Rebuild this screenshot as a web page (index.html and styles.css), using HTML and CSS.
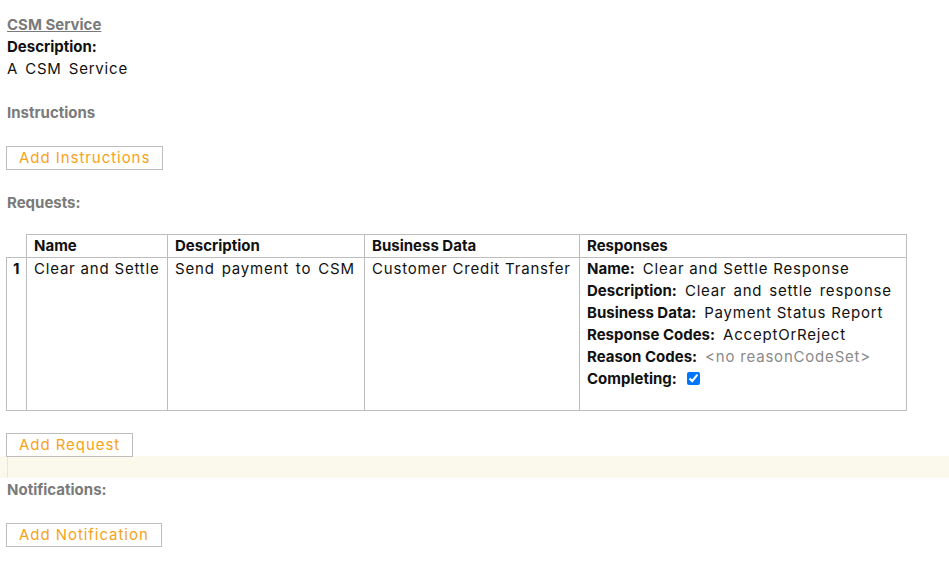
FILE: index.html
```html
<!DOCTYPE html>
<html>
    <head>
        <link rel="stylesheet" href="styles.css">
    </head>
    <body>
        <div class="service">
            <div class="line"><a class="title">CSM Service</a></div>
            <div class="line label">Description:</div>
            <div class="line desc">A CSM Service</div>

            <h2 class="heading">Instructions</h2>
            <div class="btn">Add Instructions</div>

            <h2 class="heading before-table">Requests:</h2>
            <table class="requests">
                <tr>
                    <th class="idx empty"></th>
                    <th class="c-name">Name</th>
                    <th class="c-desc">Description</th>
                    <th class="c-data">Business Data</th>
                    <th class="c-resp">Responses</th>
                </tr>
                <tr>
                    <td class="idx">1</td>
                    <td>Clear and Settle</td>
                    <td class="desc">Send payment to CSM</td>
                    <td>Customer Credit Transfer</td>
                    <td class="resp">
                        <div><b>Name:</b> Clear and Settle Response</div>
                        <div><b>Description:</b> <span class="desc">Clear and settle response</span></div>
                        <div><b>Business Data:</b> Payment Status Report</div>
                        <div><b>Response Codes:</b> AcceptOrReject</div>
                        <div><b>Reason Codes:</b> <span class="none">&lt;no reasonCodeSet&gt;</span></div>
                        <div><b>Completing:</b> <input type="checkbox" checked></div>
                    </td>
                </tr>
            </table>
            <div class="btn">Add Request</div>
            <div class="band"><span class="caret"></span></div>

            <h2 class="heading tight">Notifications:</h2>
            <div class="btn">Add Notification</div>
        </div>
    </body>
</html>
```

FILE: styles.css
```css
body {
    margin: 0;
    font-family: Inter, 'Open Sans', sans-serif;
    font-size: 15px;
    line-height: 22px;
    color: #111;
    background-color: #fff;
}
.service {
    padding: 14px 0 0 6px;
    letter-spacing: 0.8px;
}
.line {
    padding-left: 1px;
}
a.title {
    color: #7a7a7a;
    font-weight: 700;
    letter-spacing: 0;
    text-decoration: underline;
}
.label {
    font-weight: 700;
    letter-spacing: 0;
}
.desc {
    word-spacing: 2px;
}
h2.heading {
    margin: 22px 0 22px 0;
    padding-left: 1px;
    font-size: 15px;
    line-height: 22px;
    font-weight: 700;
    letter-spacing: 0;
    color: #7a7a7a;
}
h2.heading.before-table {
    margin-bottom: 20px;
}
h2.heading.tight {
    margin-top: 1px;
}
div.btn {
    display: inline-block;
    vertical-align: top;
    border: 1px solid #bdbdbd;
    color: #f5a31a;
    padding: 0 12px;
    line-height: 22px;
    letter-spacing: 0.95px;
}
table.requests {
    border-collapse: collapse;
    margin: 0 0 22px 0;
    font-size: 15px;
    line-height: 22px;
}
table.requests th, table.requests td {
    border: 1px solid #bdbdbd;
    padding: 0 6px 0 7px;
    text-align: left;
    vertical-align: top;
    white-space: nowrap;
}
table.requests th {
    font-weight: 700;
    letter-spacing: 0;
}
table.requests th.empty {
    border-top: none;
    border-left: none;
}
table.requests .idx {
    width: 7px;
    padding: 0 6px 0 6px;
    font-weight: 700;
    letter-spacing: 0;
}
.c-name { width: 127px; }
.c-desc { width: 183px; }
.c-data { width: 201px; }
.c-resp { width: 313px; }
table.requests td.resp {
    padding-bottom: 20px;
}
td.resp b {
    font-weight: 700;
    letter-spacing: 0;
    margin-right: 3px;
}
.none {
    color: #8a8a8a;
}
td.resp input {
    margin: 0 0 0 2px;
    width: 13px;
    height: 13px;
    vertical-align: -1px;
}
.band {
    height: 22px;
    margin: -1px 0 0 -6px;
    background-color: #fbf8ec;
}
.caret {
    display: block;
    margin-left: 7px;
    width: 1px;
    height: 22px;
    background-color: #e4e4f4;
}
```
